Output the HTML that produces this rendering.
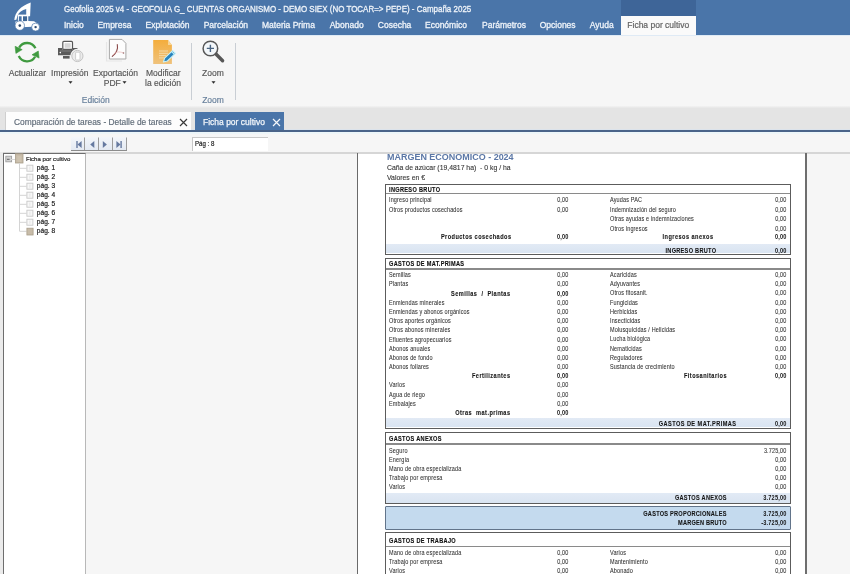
<!DOCTYPE html>
<html><head><meta charset="utf-8"><style>
html,body{margin:0;padding:0;width:850px;height:574px;overflow:hidden;background:#f5f5f5}
body{position:relative;font-family:"Liberation Sans",sans-serif;will-change:transform}
.t{position:absolute;white-space:nowrap;line-height:20px}
</style></head><body>
<div style="position:absolute;left:0px;top:0px;width:850px;height:35px;background:#4a75a9"></div>
<div style="position:absolute;left:621px;top:0px;width:75px;height:16px;background:#3e6598"></div>
<div style="position:absolute;left:621px;top:16px;width:75px;height:20px;background:#fafafa"></div>
<svg style="position:absolute;left:0;top:0" width="60" height="36" viewBox="0 0 60 36">
<path d="M14.3 20.1 C15 12 20.5 6 30.7 2.4 L30.1 16.2 L26.2 16.2 L26.2 9.1 C22 10 18.8 12.5 17.6 15.5 L16.4 19.8 Z" fill="#fff"/>
<rect x="17.9" y="14.6" width="10.4" height="8" fill="#fff"/>
<rect x="18.9" y="16.3" width="2.7" height="5" fill="#4a75a9"/>
<rect x="23" y="16.3" width="4.1" height="5.6" fill="#3f6796"/>
<path d="M15.5 21.5 L28.3 21 L34 21.3 L37.6 23.5 L38 26.5 L15.5 27.5 Z" fill="#fff"/>
<circle cx="19.8" cy="25.6" r="4.7" fill="#fff" stroke="#4a75a9" stroke-width="0.7"/><circle cx="19.8" cy="25.6" r="1.3" fill="#2d4a70"/>
<circle cx="35.6" cy="27.1" r="4" fill="#fff" stroke="#4a75a9" stroke-width="0.7"/><circle cx="35.6" cy="27.1" r="1.2" fill="#2d4a70"/>
</svg>
<div class="t" style="left:64px;top:-1.50px;font-size:9px;color:#eef3f9;font-weight:400;-webkit-text-stroke:0.3px #eef3f9;transform:scale(0.886,1.07);transform-origin:0 50%;">Geofolia 2025 v4 - GEOFOLIA G_ CUENTAS ORGANISMO - DEMO SIEX (NO TOCAR=&gt; PEPE) - Campaña 2025</div>
<div class="t" style="left:64px;top:14.70px;font-size:8.5px;color:#eef3f9;font-weight:400;-webkit-text-stroke:0.3px #eef3f9;">Inicio</div>
<div class="t" style="left:97.4px;top:14.70px;font-size:8.5px;color:#eef3f9;font-weight:400;-webkit-text-stroke:0.3px #eef3f9;">Empresa</div>
<div class="t" style="left:145.6px;top:14.70px;font-size:8.5px;color:#eef3f9;font-weight:400;-webkit-text-stroke:0.3px #eef3f9;">Explotación</div>
<div class="t" style="left:203.7px;top:14.70px;font-size:8.5px;color:#eef3f9;font-weight:400;-webkit-text-stroke:0.3px #eef3f9;">Parcelación</div>
<div class="t" style="left:262px;top:14.70px;font-size:8.5px;color:#eef3f9;font-weight:400;-webkit-text-stroke:0.3px #eef3f9;">Materia Prima</div>
<div class="t" style="left:329.7px;top:14.70px;font-size:8.5px;color:#eef3f9;font-weight:400;-webkit-text-stroke:0.3px #eef3f9;">Abonado</div>
<div class="t" style="left:377.8px;top:14.70px;font-size:8.5px;color:#eef3f9;font-weight:400;-webkit-text-stroke:0.3px #eef3f9;">Cosecha</div>
<div class="t" style="left:425px;top:14.70px;font-size:8.5px;color:#eef3f9;font-weight:400;-webkit-text-stroke:0.3px #eef3f9;">Económico</div>
<div class="t" style="left:482px;top:14.70px;font-size:8.5px;color:#eef3f9;font-weight:400;-webkit-text-stroke:0.3px #eef3f9;">Parámetros</div>
<div class="t" style="left:539.7px;top:14.70px;font-size:8.5px;color:#eef3f9;font-weight:400;-webkit-text-stroke:0.3px #eef3f9;">Opciones</div>
<div class="t" style="left:589.7px;top:14.70px;font-size:8.5px;color:#eef3f9;font-weight:400;-webkit-text-stroke:0.3px #eef3f9;">Ayuda</div>
<div class="t" style="left:627.3px;top:14.70px;font-size:8.5px;color:#636363;font-weight:400;-webkit-text-stroke:0.2px #636363;">Ficha por cultivo</div>
<div style="position:absolute;left:0px;top:35px;width:850px;height:1px;background:#dfeaf5"></div>
<div style="position:absolute;left:0px;top:36px;width:850px;height:72px;background:#f6f6f6"></div>
<svg style="position:absolute;left:10px;top:38px" width="35" height="28" viewBox="10 38 35 28">
<path d="M35.44 48.31 A9.2 9.2 0 0 0 19.13 47.6" fill="none" stroke="#3f9a3f" stroke-width="2.3"/>
<path d="M18.76 56.09 A9.2 9.2 0 0 0 35.07 56.8" fill="none" stroke="#3f9a3f" stroke-width="2.3"/>
<path d="M15.1 46.3 L22.2 49.6 L15.9 53.4 Z" fill="#3f9a3f" stroke="#3f9a3f" stroke-width="0.6" stroke-linejoin="round"/>
<path d="M39.1 58.1 L32.0 54.8 L38.3 51.0 Z" fill="#3f9a3f" stroke="#3f9a3f" stroke-width="0.6" stroke-linejoin="round"/>
</svg>
<svg style="position:absolute;left:52px;top:38px" width="36" height="28" viewBox="52 38 36 28">
<rect x="62.8" y="41.4" width="9.7" height="8" rx="1" fill="#fff" stroke="#585858" stroke-width="1.2"/>
<rect x="64.6" y="43.2" width="6" height="4.6" fill="#d5d5d5"/>
<path d="M58 48 L62.2 48 L62.2 49.6 L73 49.6 L73 48 L77.5 48 L77.5 55.2 L58 55.2 Z" fill="#5a5a5a"/>
<path d="M60 51 H71" stroke="#8a8a8a" stroke-width="0.8"/>
<circle cx="60.3" cy="52.6" r="0.8" fill="#fff"/>
<rect x="63" y="56" width="6.6" height="2.6" fill="#5a5a5a"/>
<circle cx="77.4" cy="56" r="7.2" fill="#f6f6f6"/>
<circle cx="77.4" cy="56" r="5.6" fill="#ececec" stroke="#c4c4c4" stroke-width="1"/>
<rect x="75.6" y="52.2" width="4.4" height="7.8" rx="0.8" fill="#fff" stroke="#bdbdbd" stroke-width="0.7"/>
</svg>
<svg style="position:absolute;left:100px;top:36px" width="32" height="30" viewBox="100 36 32 30">
<path d="M106.5 42 V61 H122" fill="none" stroke="#e6e6e6" stroke-width="1.2"/>
<path d="M109.4 39.4 L122 39.4 L125.9 43.3 L125.9 59 L109.4 59 Z" fill="#fdfdfd" stroke="#a8a8a8" stroke-width="1"/>
<path d="M117.3 44.5 C118 48 116.5 53 112.3 56.4" fill="none" stroke="#8a4848" stroke-width="1.1" stroke-linecap="round"/>
<path d="M113 55 C115 52 119 51 123.5 53" fill="none" stroke="#e8b8b8" stroke-width="0.7"/>
<circle cx="123.5" cy="53" r="0.8" fill="#9a6a6a"/>
</svg>
<svg style="position:absolute;left:146px;top:36px" width="36" height="32" viewBox="146 36 36 32">
<defs><linearGradient id="og" x1="0" y1="0" x2="0" y2="1"><stop offset="0" stop-color="#f4ad3c"/><stop offset="1" stop-color="#efc27c"/></linearGradient></defs>
<path d="M153.2 39.9 L168 39.9 L171.9 44.9 L171.9 63.9 L153.2 63.9 Z" fill="url(#og)"/>
<path d="M168 39.9 L168 44.9 L171.9 44.9 Z" fill="#f7d598"/>
<path d="M159 51 H168 M159 53.3 H168 M159 55.6 H166 M159 57.9 H164" stroke="#f6dcae" stroke-width="0.9"/>
<path d="M163.4 62 L164.6 58.2 L172.6 50.6 L175.4 53.4 L167.4 61 Z" fill="#2a83bd" stroke="#c9f1f8" stroke-width="1.1" stroke-linejoin="round"/>
<path d="M171.6 51.6 L174.4 54.4" stroke="#bdeef6" stroke-width="1.2"/>
</svg>
<svg style="position:absolute;left:196px;top:36px" width="36" height="30" viewBox="196 36 36 30">
<circle cx="210.4" cy="48.5" r="7.3" fill="#f3f7fa" stroke="#575757" stroke-width="1.5"/>
<path d="M206.8 48.4 H214 M210.4 44.7 V52" stroke="#4a6482" stroke-width="1.4"/>
<path d="M216.2 54.2 L222.6 60.8" stroke="#575757" stroke-width="3.4" stroke-linecap="round"/>
</svg>
<div class="t" style="left:8.8px;top:63.10px;font-size:8.5px;color:#555;font-weight:400;-webkit-text-stroke:0.15px #555;">Actualizar</div>
<div class="t" style="left:51.1px;top:63.10px;font-size:8.5px;color:#555;font-weight:400;-webkit-text-stroke:0.15px #555;">Impresión</div>
<svg style="position:absolute;left:68px;top:81px" width="5" height="3"><path d="M0.5 0.3 H4.5 L2.5 2.8 Z" fill="#2a2a2a"/></svg>
<div class="t" style="left:93px;top:63.10px;font-size:8.5px;color:#555;font-weight:400;-webkit-text-stroke:0.15px #555;">Exportación</div>
<div class="t" style="left:103.8px;top:73.10px;font-size:8.5px;color:#555;font-weight:400;-webkit-text-stroke:0.15px #555;">PDF</div>
<svg style="position:absolute;left:121.5px;top:81px" width="5" height="3"><path d="M0.5 0.3 H4.5 L2.5 2.8 Z" fill="#2a2a2a"/></svg>
<div class="t" style="left:146px;top:63.10px;font-size:8.5px;color:#555;font-weight:400;-webkit-text-stroke:0.15px #555;">Modificar</div>
<div class="t" style="left:145px;top:73.10px;font-size:8.5px;color:#555;font-weight:400;-webkit-text-stroke:0.15px #555;">la edición</div>
<div class="t" style="left:202px;top:63.10px;font-size:8.5px;color:#555;font-weight:400;-webkit-text-stroke:0.15px #555;">Zoom</div>
<svg style="position:absolute;left:210.5px;top:81px" width="5" height="3"><path d="M0.5 0.3 H4.5 L2.5 2.8 Z" fill="#2a2a2a"/></svg>
<div class="t" style="left:-104.3px;width:400px;text-align:center;top:90.00px;font-size:8.5px;color:#647d99;font-weight:400;-webkit-text-stroke:0.15px #647d99;">Edición</div>
<div class="t" style="left:13px;width:400px;text-align:center;top:90.00px;font-size:8.5px;color:#647d99;font-weight:400;-webkit-text-stroke:0.15px #647d99;">Zoom</div>
<div style="position:absolute;left:191px;top:43px;width:1px;height:57px;background:#c9ced4"></div>
<div style="position:absolute;left:235px;top:43px;width:1px;height:57px;background:#c9ced4"></div>
<div style="position:absolute;left:0px;top:105.5px;width:850px;height:2.5px;background:linear-gradient(#f3f3f3,#e6e6e6)"></div>
<div style="position:absolute;left:0px;top:108px;width:850px;height:22px;background:#e4e4e4"></div>
<div style="position:absolute;left:0px;top:128.5px;width:850px;height:1.5px;background:#dce3eb"></div>
<div style="position:absolute;left:5px;top:112px;width:186px;height:18px;background:#fdfdfd;border-left:1px solid #cfcfcf;box-sizing:border-box"></div>
<div class="t" style="left:14px;top:111.50px;font-size:8.4px;color:#5f6b78;font-weight:400;-webkit-text-stroke:0.15px #5f6b78;">Comparación de tareas - Detalle de tareas</div>
<svg style="position:absolute;left:178.5px;top:117.5px" width="9" height="9" viewBox="0 0 9 9"><path d="M1 1 L8 8 M8 1 L1 8" stroke="#3a3a3a" stroke-width="1.2"/></svg>
<div style="position:absolute;left:195px;top:112px;width:89px;height:18px;background:#4a75a9"></div>
<div class="t" style="left:203px;top:111.50px;font-size:8.5px;color:#f2f6fa;font-weight:400;-webkit-text-stroke:0.25px #f2f6fa;">Ficha por cultivo</div>
<svg style="position:absolute;left:272px;top:117.5px" width="9" height="9" viewBox="0 0 9 9"><path d="M1 1 L8 8 M8 1 L1 8" stroke="#f5f8fb" stroke-width="1.2"/></svg>
<div style="position:absolute;left:0px;top:130px;width:850px;height:2px;background:#4a6489"></div>
<div style="position:absolute;left:0px;top:132px;width:850px;height:442px;background:#f6f6f6"></div>
<div style="position:absolute;left:0px;top:132px;width:850px;height:1.5px;background:#edf6f9"></div>
<svg style="position:absolute;left:70px;top:136px" width="58" height="16" viewBox="0 0 58 16">
<defs><linearGradient id="nb" x1="0" y1="0" x2="0" y2="1"><stop offset="0" stop-color="#f3f6fa"/><stop offset="1" stop-color="#e3e9f2"/></linearGradient></defs>
<rect x="1" y="1" width="56" height="13.5" fill="url(#nb)"/>
<path d="M1 14.5 H57" stroke="#8c8c8c" stroke-width="1"/>
<path d="M14.5 1.5 V14 M28.5 1.5 V14 M42.5 1.5 V14 M56.5 1.5 V14" stroke="#9c9c9c" stroke-width="1"/>
<rect x="6.3" y="5" width="1.4" height="7" fill="#6579a0"/><path d="M11.6 5 V12 L7.5 8.5 Z" fill="#6579a0"/>
<path d="M24.3 5 V12 L20.2 8.5 Z" fill="#6579a0"/>
<path d="M32.8 5 V12 L36.9 8.5 Z" fill="#6579a0"/>
<path d="M46.4 5 V12 L50.5 8.5 Z" fill="#6579a0"/><rect x="50.4" y="5" width="1.4" height="7" fill="#6579a0"/>
</svg>
<div style="position:absolute;left:192px;top:137px;width:76px;height:14px;background:#fff;border-top:1px solid #c8c8c8;border-left:1px solid #c8c8c8;box-sizing:border-box"></div>
<div class="t" style="left:194.7px;top:133.60px;font-size:6.6px;color:#222;font-weight:400;transform:scaleX(0.93);transform-origin:0 50%;-webkit-text-stroke:0.2px #222;">Pág : 8</div>
<div style="position:absolute;left:0px;top:152px;width:850px;height:2px;background:#d6d6d6"></div>
<div style="position:absolute;left:0px;top:152px;width:3px;height:422px;background:#ebebeb"></div>
<div style="position:absolute;left:3px;top:152.8px;width:83px;height:440px;background:#fff;border-top:1.5px solid #6e6e6e;border-left:1.1px solid #6e6e6e;border-right:1.5px solid #b8b8b8;box-sizing:border-box"></div>
<svg style="position:absolute;left:0;top:150px" width="80" height="90" viewBox="0 150 80 90">
<rect x="5.8" y="156.2" width="5.8" height="5.6" fill="#d2d2d2" stroke="#a0a0a0" stroke-width="0.9"/>
<path d="M7 159.3 H9.6" stroke="#555" stroke-width="0.9"/>
<rect x="11" y="159" width="4.5" height="1" fill="#d8d8d8"/>
<rect x="15.5" y="153.8" width="7.5" height="9.2" fill="#c8bca9" stroke="#a99d8a" stroke-width="0.8"/>
<path d="M17.3 157 H21.3 M17.3 159 H21.3 M17.3 161 H21.3" stroke="#ddd3c4" stroke-width="0.6"/>
<rect x="19" y="163" width="1" height="68.5" fill="#d4d4d4"/>
<rect x="20" y="167.8" width="6.5" height="1" fill="#d4d4d4"/><rect x="20" y="176.8" width="6.5" height="1" fill="#d4d4d4"/><rect x="20" y="185.8" width="6.5" height="1" fill="#d4d4d4"/><rect x="20" y="194.8" width="6.5" height="1" fill="#d4d4d4"/><rect x="20" y="203.8" width="6.5" height="1" fill="#d4d4d4"/><rect x="20" y="212.8" width="6.5" height="1" fill="#d4d4d4"/><rect x="20" y="221.8" width="6.5" height="1" fill="#d4d4d4"/><rect x="20" y="230.8" width="6.5" height="1" fill="#d4d4d4"/><rect x="26.9" y="165.2" width="6" height="6" fill="#f8f8f8" stroke="#c8c8c8" stroke-width="0.9"/><path d="M29.9 166.6 V169.8" stroke="#dcdcdc" stroke-width="0.7"/><rect x="26.9" y="174.2" width="6" height="6" fill="#f8f8f8" stroke="#c8c8c8" stroke-width="0.9"/><path d="M29.9 175.6 V178.8" stroke="#dcdcdc" stroke-width="0.7"/><rect x="26.9" y="183.2" width="6" height="6" fill="#f8f8f8" stroke="#c8c8c8" stroke-width="0.9"/><path d="M29.9 184.6 V187.8" stroke="#dcdcdc" stroke-width="0.7"/><rect x="26.9" y="192.2" width="6" height="6" fill="#f8f8f8" stroke="#c8c8c8" stroke-width="0.9"/><path d="M29.9 193.6 V196.8" stroke="#dcdcdc" stroke-width="0.7"/><rect x="26.9" y="201.2" width="6" height="6" fill="#f8f8f8" stroke="#c8c8c8" stroke-width="0.9"/><path d="M29.9 202.6 V205.8" stroke="#dcdcdc" stroke-width="0.7"/><rect x="26.9" y="210.2" width="6" height="6" fill="#f8f8f8" stroke="#c8c8c8" stroke-width="0.9"/><path d="M29.9 211.6 V214.8" stroke="#dcdcdc" stroke-width="0.7"/><rect x="26.9" y="219.2" width="6" height="6" fill="#f8f8f8" stroke="#c8c8c8" stroke-width="0.9"/><path d="M29.9 220.6 V223.8" stroke="#dcdcdc" stroke-width="0.7"/>
<rect x="26.9" y="228.2" width="6.2" height="6.8" fill="#c8bca9" stroke="#a99d8a" stroke-width="0.8"/>
</svg>
<div class="t" style="left:26px;top:149.30px;font-size:6.1px;color:#2a2a2a;font-weight:400;-webkit-text-stroke:0.2px #2a2a2a;">Ficha por cultivo</div>
<div class="t" style="left:36.8px;top:158.30px;font-size:6.6px;color:#222;font-weight:400;-webkit-text-stroke:0.2px #222;">pág. 1</div>
<div class="t" style="left:36.8px;top:167.30px;font-size:6.6px;color:#222;font-weight:400;-webkit-text-stroke:0.2px #222;">pág. 2</div>
<div class="t" style="left:36.8px;top:176.30px;font-size:6.6px;color:#222;font-weight:400;-webkit-text-stroke:0.2px #222;">pág. 3</div>
<div class="t" style="left:36.8px;top:185.30px;font-size:6.6px;color:#222;font-weight:400;-webkit-text-stroke:0.2px #222;">pág. 4</div>
<div class="t" style="left:36.8px;top:194.30px;font-size:6.6px;color:#222;font-weight:400;-webkit-text-stroke:0.2px #222;">pág. 5</div>
<div class="t" style="left:36.8px;top:203.30px;font-size:6.6px;color:#222;font-weight:400;-webkit-text-stroke:0.2px #222;">pág. 6</div>
<div class="t" style="left:36.8px;top:212.30px;font-size:6.6px;color:#222;font-weight:400;-webkit-text-stroke:0.2px #222;">pág. 7</div>
<div class="t" style="left:36.8px;top:221.30px;font-size:6.6px;color:#222;font-weight:400;-webkit-text-stroke:0.2px #222;">pág. 8</div>
<div style="position:absolute;left:357px;top:153px;width:1px;height:421px;background:#6a6a6a"></div>
<div style="position:absolute;left:358px;top:154px;width:447px;height:420px;background:#fff"></div>
<div style="position:absolute;left:805px;top:153px;width:2px;height:421px;background:#6e6e6e"></div>
<div class="t" style="left:387px;top:146.60px;font-size:9.6px;color:#5b77a6;font-weight:700;transform:scaleX(0.935);transform-origin:0 50%;">MARGEN ECONOMICO - 2024</div>
<div class="t" style="left:387px;top:158.30px;font-size:7.2px;color:#333;font-weight:400;transform:scaleX(0.955);transform-origin:0 50%;-webkit-text-stroke:0.1px #333;">Caña de azúcar (19,4817 ha) &nbsp;- 0 kg / ha</div>
<div class="t" style="left:387px;top:167.50px;font-size:7.2px;color:#333;font-weight:400;transform:scaleX(0.955);transform-origin:0 50%;-webkit-text-stroke:0.1px #333;">Valores en €</div>
<div style="position:absolute;left:385px;top:183.9px;width:406px;height:70.9px;border:1.3px solid #5c5c5c;border-bottom-width:1.6px;box-sizing:border-box;background:#fff"></div>
<div style="position:absolute;left:386.3px;top:243.8px;width:403.4px;height:9.599999999999994px;background:linear-gradient(#e2eaf5,#d9e4f1)"></div>
<div style="position:absolute;left:386.3px;top:192.9px;width:403.4px;height:1.4px;background:#8a8a8a"></div>
<div class="t" style="left:389px;top:179.60px;font-size:5.6px;color:#111;font-weight:700;letter-spacing:0.33px;transform:scale(1,1.15);transform-origin:0 50%;-webkit-text-stroke:0.12px #111;">INGRESO BRUTO</div>
<div class="t" style="left:389px;top:190.10px;font-size:5.5px;color:#2e2e2e;font-weight:400;letter-spacing:0.14px;transform:scale(1,1.15);transform-origin:0 50%;-webkit-text-stroke:0.05px #2e2e2e;">Ingreso principal</div>
<div class="t" style="right:281.6px;top:190.10px;font-size:5.5px;color:#2e2e2e;font-weight:400;letter-spacing:0.14px;transform:scale(1,1.15);transform-origin:100% 50%;-webkit-text-stroke:0.05px #2e2e2e;">0,00</div>
<div class="t" style="left:389px;top:199.70px;font-size:5.5px;color:#2e2e2e;font-weight:400;letter-spacing:0.14px;transform:scale(1,1.15);transform-origin:0 50%;-webkit-text-stroke:0.05px #2e2e2e;">Otros productos cosechados</div>
<div class="t" style="right:281.6px;top:199.70px;font-size:5.5px;color:#2e2e2e;font-weight:400;letter-spacing:0.14px;transform:scale(1,1.15);transform-origin:100% 50%;-webkit-text-stroke:0.05px #2e2e2e;">0,00</div>
<div class="t" style="left:610px;top:190.10px;font-size:5.5px;color:#2e2e2e;font-weight:400;letter-spacing:0.14px;transform:scale(1,1.15);transform-origin:0 50%;-webkit-text-stroke:0.05px #2e2e2e;">Ayudas PAC</div>
<div class="t" style="right:63.60000000000002px;top:190.10px;font-size:5.5px;color:#2e2e2e;font-weight:400;letter-spacing:0.14px;transform:scale(1,1.15);transform-origin:100% 50%;-webkit-text-stroke:0.05px #2e2e2e;">0,00</div>
<div class="t" style="left:610px;top:199.70px;font-size:5.5px;color:#2e2e2e;font-weight:400;letter-spacing:0.14px;transform:scale(1,1.15);transform-origin:0 50%;-webkit-text-stroke:0.05px #2e2e2e;">Indemnización del seguro</div>
<div class="t" style="right:63.60000000000002px;top:199.70px;font-size:5.5px;color:#2e2e2e;font-weight:400;letter-spacing:0.14px;transform:scale(1,1.15);transform-origin:100% 50%;-webkit-text-stroke:0.05px #2e2e2e;">0,00</div>
<div class="t" style="left:610px;top:209.30px;font-size:5.5px;color:#2e2e2e;font-weight:400;letter-spacing:0.14px;transform:scale(1,1.15);transform-origin:0 50%;-webkit-text-stroke:0.05px #2e2e2e;">Otras ayudas e indemnizaciones</div>
<div class="t" style="right:63.60000000000002px;top:209.30px;font-size:5.5px;color:#2e2e2e;font-weight:400;letter-spacing:0.14px;transform:scale(1,1.15);transform-origin:100% 50%;-webkit-text-stroke:0.05px #2e2e2e;">0,00</div>
<div class="t" style="left:610px;top:218.90px;font-size:5.5px;color:#2e2e2e;font-weight:400;letter-spacing:0.14px;transform:scale(1,1.15);transform-origin:0 50%;-webkit-text-stroke:0.05px #2e2e2e;">Otros ingresos</div>
<div class="t" style="right:63.60000000000002px;top:218.90px;font-size:5.5px;color:#2e2e2e;font-weight:400;letter-spacing:0.14px;transform:scale(1,1.15);transform-origin:100% 50%;-webkit-text-stroke:0.05px #2e2e2e;">0,00</div>
<div class="t" style="right:338.55px;top:227.20px;font-size:5.6px;color:#141414;font-weight:700;letter-spacing:0.45px;transform:scale(1,1.15);transform-origin:100% 50%;-webkit-text-stroke:0.08px #141414;">Productos cosechados</div>
<div class="t" style="right:281.4px;top:227.20px;font-size:5.6px;color:#141414;font-weight:700;letter-spacing:0.2px;transform:scale(1,1.15);transform-origin:100% 50%;">0,00</div>
<div class="t" style="right:136.54999999999995px;top:227.20px;font-size:5.6px;color:#141414;font-weight:700;letter-spacing:0.45px;transform:scale(1,1.15);transform-origin:100% 50%;-webkit-text-stroke:0.08px #141414;">Ingresos anexos</div>
<div class="t" style="right:63.39999999999998px;top:227.20px;font-size:5.6px;color:#141414;font-weight:700;letter-spacing:0.2px;transform:scale(1,1.15);transform-origin:100% 50%;">0,00</div>
<div class="t" style="right:133.72000000000003px;top:240.50px;font-size:5.6px;color:#141414;font-weight:700;letter-spacing:0.28px;transform:scale(1,1.15);transform-origin:100% 50%;-webkit-text-stroke:0.08px #141414;">INGRESO BRUTO</div>
<div class="t" style="right:63.39999999999998px;top:240.50px;font-size:5.6px;color:#141414;font-weight:700;letter-spacing:0.2px;transform:scale(1,1.15);transform-origin:100% 50%;">0,00</div>
<div style="position:absolute;left:385px;top:258px;width:406px;height:170.8px;border:1.3px solid #5c5c5c;border-bottom-width:1.6px;box-sizing:border-box;background:#fff"></div>
<div style="position:absolute;left:386.3px;top:417.6px;width:403.4px;height:9.599999999999966px;background:linear-gradient(#e2eaf5,#d9e4f1)"></div>
<div style="position:absolute;left:386.3px;top:268.29999999999995px;width:403.4px;height:1.4px;background:#8a8a8a"></div>
<div class="t" style="left:389px;top:254.30px;font-size:5.6px;color:#111;font-weight:700;letter-spacing:0.33px;transform:scale(1,1.15);transform-origin:0 50%;-webkit-text-stroke:0.12px #111;">GASTOS DE MAT.PRIMAS</div>
<div class="t" style="left:389px;top:265.10px;font-size:5.5px;color:#2e2e2e;font-weight:400;letter-spacing:0.14px;transform:scale(1,1.15);transform-origin:0 50%;-webkit-text-stroke:0.05px #2e2e2e;">Semillas</div>
<div class="t" style="right:281.6px;top:265.10px;font-size:5.5px;color:#2e2e2e;font-weight:400;letter-spacing:0.14px;transform:scale(1,1.15);transform-origin:100% 50%;-webkit-text-stroke:0.05px #2e2e2e;">0,00</div>
<div class="t" style="left:389px;top:274.30px;font-size:5.5px;color:#2e2e2e;font-weight:400;letter-spacing:0.14px;transform:scale(1,1.15);transform-origin:0 50%;-webkit-text-stroke:0.05px #2e2e2e;">Plantas</div>
<div class="t" style="right:281.6px;top:274.30px;font-size:5.5px;color:#2e2e2e;font-weight:400;letter-spacing:0.14px;transform:scale(1,1.15);transform-origin:100% 50%;-webkit-text-stroke:0.05px #2e2e2e;">0,00</div>
<div class="t" style="left:389px;top:292.70px;font-size:5.5px;color:#2e2e2e;font-weight:400;letter-spacing:0.14px;transform:scale(1,1.15);transform-origin:0 50%;-webkit-text-stroke:0.05px #2e2e2e;">Enmiendas minerales</div>
<div class="t" style="right:281.6px;top:292.70px;font-size:5.5px;color:#2e2e2e;font-weight:400;letter-spacing:0.14px;transform:scale(1,1.15);transform-origin:100% 50%;-webkit-text-stroke:0.05px #2e2e2e;">0,00</div>
<div class="t" style="left:389px;top:301.80px;font-size:5.5px;color:#2e2e2e;font-weight:400;letter-spacing:0.14px;transform:scale(1,1.15);transform-origin:0 50%;-webkit-text-stroke:0.05px #2e2e2e;">Enmiendas y abonos orgánicos</div>
<div class="t" style="right:281.6px;top:301.80px;font-size:5.5px;color:#2e2e2e;font-weight:400;letter-spacing:0.14px;transform:scale(1,1.15);transform-origin:100% 50%;-webkit-text-stroke:0.05px #2e2e2e;">0,00</div>
<div class="t" style="left:389px;top:311.00px;font-size:5.5px;color:#2e2e2e;font-weight:400;letter-spacing:0.14px;transform:scale(1,1.15);transform-origin:0 50%;-webkit-text-stroke:0.05px #2e2e2e;">Otros aportes orgánicos</div>
<div class="t" style="right:281.6px;top:311.00px;font-size:5.5px;color:#2e2e2e;font-weight:400;letter-spacing:0.14px;transform:scale(1,1.15);transform-origin:100% 50%;-webkit-text-stroke:0.05px #2e2e2e;">0,00</div>
<div class="t" style="left:389px;top:320.30px;font-size:5.5px;color:#2e2e2e;font-weight:400;letter-spacing:0.14px;transform:scale(1,1.15);transform-origin:0 50%;-webkit-text-stroke:0.05px #2e2e2e;">Otros abonos minerales</div>
<div class="t" style="right:281.6px;top:320.30px;font-size:5.5px;color:#2e2e2e;font-weight:400;letter-spacing:0.14px;transform:scale(1,1.15);transform-origin:100% 50%;-webkit-text-stroke:0.05px #2e2e2e;">0,00</div>
<div class="t" style="left:389px;top:329.50px;font-size:5.5px;color:#2e2e2e;font-weight:400;letter-spacing:0.14px;transform:scale(1,1.15);transform-origin:0 50%;-webkit-text-stroke:0.05px #2e2e2e;">Efluentes agropecuarios</div>
<div class="t" style="right:281.6px;top:329.50px;font-size:5.5px;color:#2e2e2e;font-weight:400;letter-spacing:0.14px;transform:scale(1,1.15);transform-origin:100% 50%;-webkit-text-stroke:0.05px #2e2e2e;">0,00</div>
<div class="t" style="left:389px;top:338.70px;font-size:5.5px;color:#2e2e2e;font-weight:400;letter-spacing:0.14px;transform:scale(1,1.15);transform-origin:0 50%;-webkit-text-stroke:0.05px #2e2e2e;">Abonos anuales</div>
<div class="t" style="right:281.6px;top:338.70px;font-size:5.5px;color:#2e2e2e;font-weight:400;letter-spacing:0.14px;transform:scale(1,1.15);transform-origin:100% 50%;-webkit-text-stroke:0.05px #2e2e2e;">0,00</div>
<div class="t" style="left:389px;top:347.90px;font-size:5.5px;color:#2e2e2e;font-weight:400;letter-spacing:0.14px;transform:scale(1,1.15);transform-origin:0 50%;-webkit-text-stroke:0.05px #2e2e2e;">Abonos de fondo</div>
<div class="t" style="right:281.6px;top:347.90px;font-size:5.5px;color:#2e2e2e;font-weight:400;letter-spacing:0.14px;transform:scale(1,1.15);transform-origin:100% 50%;-webkit-text-stroke:0.05px #2e2e2e;">0,00</div>
<div class="t" style="left:389px;top:357.10px;font-size:5.5px;color:#2e2e2e;font-weight:400;letter-spacing:0.14px;transform:scale(1,1.15);transform-origin:0 50%;-webkit-text-stroke:0.05px #2e2e2e;">Abonos foliares</div>
<div class="t" style="right:281.6px;top:357.10px;font-size:5.5px;color:#2e2e2e;font-weight:400;letter-spacing:0.14px;transform:scale(1,1.15);transform-origin:100% 50%;-webkit-text-stroke:0.05px #2e2e2e;">0,00</div>
<div class="t" style="left:389px;top:375.30px;font-size:5.5px;color:#2e2e2e;font-weight:400;letter-spacing:0.14px;transform:scale(1,1.15);transform-origin:0 50%;-webkit-text-stroke:0.05px #2e2e2e;">Varios</div>
<div class="t" style="right:281.6px;top:375.30px;font-size:5.5px;color:#2e2e2e;font-weight:400;letter-spacing:0.14px;transform:scale(1,1.15);transform-origin:100% 50%;-webkit-text-stroke:0.05px #2e2e2e;">0,00</div>
<div class="t" style="left:389px;top:384.50px;font-size:5.5px;color:#2e2e2e;font-weight:400;letter-spacing:0.14px;transform:scale(1,1.15);transform-origin:0 50%;-webkit-text-stroke:0.05px #2e2e2e;">Agua de riego</div>
<div class="t" style="right:281.6px;top:384.50px;font-size:5.5px;color:#2e2e2e;font-weight:400;letter-spacing:0.14px;transform:scale(1,1.15);transform-origin:100% 50%;-webkit-text-stroke:0.05px #2e2e2e;">0,00</div>
<div class="t" style="left:389px;top:393.70px;font-size:5.5px;color:#2e2e2e;font-weight:400;letter-spacing:0.14px;transform:scale(1,1.15);transform-origin:0 50%;-webkit-text-stroke:0.05px #2e2e2e;">Embalajes</div>
<div class="t" style="right:281.6px;top:393.70px;font-size:5.5px;color:#2e2e2e;font-weight:400;letter-spacing:0.14px;transform:scale(1,1.15);transform-origin:100% 50%;-webkit-text-stroke:0.05px #2e2e2e;">0,00</div>
<div class="t" style="right:339.55px;top:283.50px;font-size:5.6px;color:#141414;font-weight:700;letter-spacing:0.45px;transform:scale(1,1.15);transform-origin:100% 50%;-webkit-text-stroke:0.08px #141414;">Semillas &nbsp;/ &nbsp;Plantas</div>
<div class="t" style="right:281.4px;top:283.50px;font-size:5.6px;color:#141414;font-weight:700;letter-spacing:0.2px;transform:scale(1,1.15);transform-origin:100% 50%;">0,00</div>
<div class="t" style="right:339.55px;top:366.20px;font-size:5.6px;color:#141414;font-weight:700;letter-spacing:0.45px;transform:scale(1,1.15);transform-origin:100% 50%;-webkit-text-stroke:0.08px #141414;">Fertilizantes</div>
<div class="t" style="right:281.4px;top:366.20px;font-size:5.6px;color:#141414;font-weight:700;letter-spacing:0.2px;transform:scale(1,1.15);transform-origin:100% 50%;">0,00</div>
<div class="t" style="right:339.55px;top:402.50px;font-size:5.6px;color:#141414;font-weight:700;letter-spacing:0.45px;transform:scale(1,1.15);transform-origin:100% 50%;-webkit-text-stroke:0.08px #141414;">Otras &nbsp;mat.primas</div>
<div class="t" style="right:281.4px;top:402.50px;font-size:5.6px;color:#141414;font-weight:700;letter-spacing:0.2px;transform:scale(1,1.15);transform-origin:100% 50%;">0,00</div>
<div class="t" style="left:610px;top:265.10px;font-size:5.5px;color:#2e2e2e;font-weight:400;letter-spacing:0.14px;transform:scale(1,1.15);transform-origin:0 50%;-webkit-text-stroke:0.05px #2e2e2e;">Acaricidas</div>
<div class="t" style="right:63.60000000000002px;top:265.10px;font-size:5.5px;color:#2e2e2e;font-weight:400;letter-spacing:0.14px;transform:scale(1,1.15);transform-origin:100% 50%;-webkit-text-stroke:0.05px #2e2e2e;">0,00</div>
<div class="t" style="left:610px;top:274.28px;font-size:5.5px;color:#2e2e2e;font-weight:400;letter-spacing:0.14px;transform:scale(1,1.15);transform-origin:0 50%;-webkit-text-stroke:0.05px #2e2e2e;">Adyuvantes</div>
<div class="t" style="right:63.60000000000002px;top:274.28px;font-size:5.5px;color:#2e2e2e;font-weight:400;letter-spacing:0.14px;transform:scale(1,1.15);transform-origin:100% 50%;-webkit-text-stroke:0.05px #2e2e2e;">0,00</div>
<div class="t" style="left:610px;top:283.46px;font-size:5.5px;color:#2e2e2e;font-weight:400;letter-spacing:0.14px;transform:scale(1,1.15);transform-origin:0 50%;-webkit-text-stroke:0.05px #2e2e2e;">Otros fitosanit.</div>
<div class="t" style="right:63.60000000000002px;top:283.46px;font-size:5.5px;color:#2e2e2e;font-weight:400;letter-spacing:0.14px;transform:scale(1,1.15);transform-origin:100% 50%;-webkit-text-stroke:0.05px #2e2e2e;">0,00</div>
<div class="t" style="left:610px;top:292.64px;font-size:5.5px;color:#2e2e2e;font-weight:400;letter-spacing:0.14px;transform:scale(1,1.15);transform-origin:0 50%;-webkit-text-stroke:0.05px #2e2e2e;">Fungicidas</div>
<div class="t" style="right:63.60000000000002px;top:292.64px;font-size:5.5px;color:#2e2e2e;font-weight:400;letter-spacing:0.14px;transform:scale(1,1.15);transform-origin:100% 50%;-webkit-text-stroke:0.05px #2e2e2e;">0,00</div>
<div class="t" style="left:610px;top:301.82px;font-size:5.5px;color:#2e2e2e;font-weight:400;letter-spacing:0.14px;transform:scale(1,1.15);transform-origin:0 50%;-webkit-text-stroke:0.05px #2e2e2e;">Herbicidas</div>
<div class="t" style="right:63.60000000000002px;top:301.82px;font-size:5.5px;color:#2e2e2e;font-weight:400;letter-spacing:0.14px;transform:scale(1,1.15);transform-origin:100% 50%;-webkit-text-stroke:0.05px #2e2e2e;">0,00</div>
<div class="t" style="left:610px;top:311.00px;font-size:5.5px;color:#2e2e2e;font-weight:400;letter-spacing:0.14px;transform:scale(1,1.15);transform-origin:0 50%;-webkit-text-stroke:0.05px #2e2e2e;">Insecticidas</div>
<div class="t" style="right:63.60000000000002px;top:311.00px;font-size:5.5px;color:#2e2e2e;font-weight:400;letter-spacing:0.14px;transform:scale(1,1.15);transform-origin:100% 50%;-webkit-text-stroke:0.05px #2e2e2e;">0,00</div>
<div class="t" style="left:610px;top:320.18px;font-size:5.5px;color:#2e2e2e;font-weight:400;letter-spacing:0.14px;transform:scale(1,1.15);transform-origin:0 50%;-webkit-text-stroke:0.05px #2e2e2e;">Molusquicidas / Helicidas</div>
<div class="t" style="right:63.60000000000002px;top:320.18px;font-size:5.5px;color:#2e2e2e;font-weight:400;letter-spacing:0.14px;transform:scale(1,1.15);transform-origin:100% 50%;-webkit-text-stroke:0.05px #2e2e2e;">0,00</div>
<div class="t" style="left:610px;top:329.36px;font-size:5.5px;color:#2e2e2e;font-weight:400;letter-spacing:0.14px;transform:scale(1,1.15);transform-origin:0 50%;-webkit-text-stroke:0.05px #2e2e2e;">Lucha biológica</div>
<div class="t" style="right:63.60000000000002px;top:329.36px;font-size:5.5px;color:#2e2e2e;font-weight:400;letter-spacing:0.14px;transform:scale(1,1.15);transform-origin:100% 50%;-webkit-text-stroke:0.05px #2e2e2e;">0,00</div>
<div class="t" style="left:610px;top:338.54px;font-size:5.5px;color:#2e2e2e;font-weight:400;letter-spacing:0.14px;transform:scale(1,1.15);transform-origin:0 50%;-webkit-text-stroke:0.05px #2e2e2e;">Nematicidas</div>
<div class="t" style="right:63.60000000000002px;top:338.54px;font-size:5.5px;color:#2e2e2e;font-weight:400;letter-spacing:0.14px;transform:scale(1,1.15);transform-origin:100% 50%;-webkit-text-stroke:0.05px #2e2e2e;">0,00</div>
<div class="t" style="left:610px;top:347.72px;font-size:5.5px;color:#2e2e2e;font-weight:400;letter-spacing:0.14px;transform:scale(1,1.15);transform-origin:0 50%;-webkit-text-stroke:0.05px #2e2e2e;">Reguladores</div>
<div class="t" style="right:63.60000000000002px;top:347.72px;font-size:5.5px;color:#2e2e2e;font-weight:400;letter-spacing:0.14px;transform:scale(1,1.15);transform-origin:100% 50%;-webkit-text-stroke:0.05px #2e2e2e;">0,00</div>
<div class="t" style="left:610px;top:356.90px;font-size:5.5px;color:#2e2e2e;font-weight:400;letter-spacing:0.14px;transform:scale(1,1.15);transform-origin:0 50%;-webkit-text-stroke:0.05px #2e2e2e;">Sustancia de crecimiento</div>
<div class="t" style="right:63.60000000000002px;top:356.90px;font-size:5.5px;color:#2e2e2e;font-weight:400;letter-spacing:0.14px;transform:scale(1,1.15);transform-origin:100% 50%;-webkit-text-stroke:0.05px #2e2e2e;">0,00</div>
<div class="t" style="right:123.04999999999995px;top:366.20px;font-size:5.6px;color:#141414;font-weight:700;letter-spacing:0.45px;transform:scale(1,1.15);transform-origin:100% 50%;-webkit-text-stroke:0.08px #141414;">Fitosanitarios</div>
<div class="t" style="right:63.39999999999998px;top:366.20px;font-size:5.6px;color:#141414;font-weight:700;letter-spacing:0.2px;transform:scale(1,1.15);transform-origin:100% 50%;">0,00</div>
<div class="t" style="right:113.54999999999995px;top:413.70px;font-size:5.6px;color:#141414;font-weight:700;letter-spacing:0.45px;transform:scale(1,1.15);transform-origin:100% 50%;-webkit-text-stroke:0.08px #141414;">GASTOS DE MAT.PRIMAS</div>
<div class="t" style="right:63.39999999999998px;top:413.70px;font-size:5.6px;color:#141414;font-weight:700;letter-spacing:0.2px;transform:scale(1,1.15);transform-origin:100% 50%;">0,00</div>
<div style="position:absolute;left:385px;top:432.3px;width:406px;height:71.80000000000001px;border:1.3px solid #5c5c5c;border-bottom-width:1.6px;box-sizing:border-box;background:#fff"></div>
<div style="position:absolute;left:386.3px;top:493px;width:403.4px;height:9.600000000000023px;background:linear-gradient(#e2eaf5,#d9e4f1)"></div>
<div style="position:absolute;left:386.3px;top:443.29999999999995px;width:403.4px;height:1.4px;background:#8a8a8a"></div>
<div class="t" style="left:389px;top:429.30px;font-size:5.6px;color:#111;font-weight:700;letter-spacing:0.33px;transform:scale(1,1.15);transform-origin:0 50%;-webkit-text-stroke:0.12px #111;">GASTOS ANEXOS</div>
<div class="t" style="left:389px;top:440.90px;font-size:5.5px;color:#2e2e2e;font-weight:400;letter-spacing:0.14px;transform:scale(1,1.15);transform-origin:0 50%;-webkit-text-stroke:0.05px #2e2e2e;">Seguro</div>
<div class="t" style="right:63.60000000000002px;top:440.90px;font-size:5.5px;color:#2e2e2e;font-weight:400;letter-spacing:0.14px;transform:scale(1,1.15);transform-origin:100% 50%;-webkit-text-stroke:0.05px #2e2e2e;">3.725,00</div>
<div class="t" style="left:389px;top:450.00px;font-size:5.5px;color:#2e2e2e;font-weight:400;letter-spacing:0.14px;transform:scale(1,1.15);transform-origin:0 50%;-webkit-text-stroke:0.05px #2e2e2e;">Energía</div>
<div class="t" style="right:63.60000000000002px;top:450.00px;font-size:5.5px;color:#2e2e2e;font-weight:400;letter-spacing:0.14px;transform:scale(1,1.15);transform-origin:100% 50%;-webkit-text-stroke:0.05px #2e2e2e;">0,00</div>
<div class="t" style="left:389px;top:459.10px;font-size:5.5px;color:#2e2e2e;font-weight:400;letter-spacing:0.14px;transform:scale(1,1.15);transform-origin:0 50%;-webkit-text-stroke:0.05px #2e2e2e;">Mano de obra especializada</div>
<div class="t" style="right:63.60000000000002px;top:459.10px;font-size:5.5px;color:#2e2e2e;font-weight:400;letter-spacing:0.14px;transform:scale(1,1.15);transform-origin:100% 50%;-webkit-text-stroke:0.05px #2e2e2e;">0,00</div>
<div class="t" style="left:389px;top:468.20px;font-size:5.5px;color:#2e2e2e;font-weight:400;letter-spacing:0.14px;transform:scale(1,1.15);transform-origin:0 50%;-webkit-text-stroke:0.05px #2e2e2e;">Trabajo por empresa</div>
<div class="t" style="right:63.60000000000002px;top:468.20px;font-size:5.5px;color:#2e2e2e;font-weight:400;letter-spacing:0.14px;transform:scale(1,1.15);transform-origin:100% 50%;-webkit-text-stroke:0.05px #2e2e2e;">0,00</div>
<div class="t" style="left:389px;top:477.30px;font-size:5.5px;color:#2e2e2e;font-weight:400;letter-spacing:0.14px;transform:scale(1,1.15);transform-origin:0 50%;-webkit-text-stroke:0.05px #2e2e2e;">Varios</div>
<div class="t" style="right:63.60000000000002px;top:477.30px;font-size:5.5px;color:#2e2e2e;font-weight:400;letter-spacing:0.14px;transform:scale(1,1.15);transform-origin:100% 50%;-webkit-text-stroke:0.05px #2e2e2e;">0,00</div>
<div class="t" style="right:123.24000000000001px;top:488.20px;font-size:5.6px;color:#141414;font-weight:700;letter-spacing:0.26px;transform:scale(1,1.15);transform-origin:100% 50%;-webkit-text-stroke:0.08px #141414;">GASTOS ANEXOS</div>
<div class="t" style="right:63.39999999999998px;top:488.20px;font-size:5.6px;color:#141414;font-weight:700;letter-spacing:0.2px;transform:scale(1,1.15);transform-origin:100% 50%;">3.725,00</div>
<div style="position:absolute;left:385px;top:505.8px;width:406px;height:24.3px;border:1.3px solid #62748a;border-bottom-width:1.6px;box-sizing:border-box;background:#c4daee;border-radius:1px"></div>
<div class="t" style="right:123.25px;top:503.50px;font-size:5.6px;color:#141414;font-weight:700;letter-spacing:0.25px;transform:scale(1,1.15);transform-origin:100% 50%;-webkit-text-stroke:0.08px #141414;">GASTOS PROPORCIONALES</div>
<div class="t" style="right:63.39999999999998px;top:503.50px;font-size:5.6px;color:#141414;font-weight:700;letter-spacing:0.2px;transform:scale(1,1.15);transform-origin:100% 50%;">3.725,00</div>
<div class="t" style="right:123.29999999999995px;top:512.90px;font-size:5.6px;color:#141414;font-weight:700;letter-spacing:0.2px;transform:scale(1,1.15);transform-origin:100% 50%;-webkit-text-stroke:0.08px #141414;">MARGEN BRUTO</div>
<div class="t" style="right:63.39999999999998px;top:512.90px;font-size:5.6px;color:#141414;font-weight:700;letter-spacing:0.2px;transform:scale(1,1.15);transform-origin:100% 50%;">-3.725,00</div>
<div style="position:absolute;left:385px;top:531.7px;width:406px;height:60px;border:1.3px solid #5c5c5c;box-sizing:border-box;background:#fff"></div>
<div style="position:absolute;left:386.3px;top:545.7px;width:403.4px;height:1.4px;background:#8a8a8a"></div>
<div class="t" style="left:389px;top:530.50px;font-size:5.6px;color:#111;font-weight:700;letter-spacing:0.33px;transform:scale(1,1.15);transform-origin:0 50%;-webkit-text-stroke:0.12px #111;">GASTOS DE TRABAJO</div>
<div class="t" style="left:389px;top:543.10px;font-size:5.5px;color:#2e2e2e;font-weight:400;letter-spacing:0.14px;transform:scale(1,1.15);transform-origin:0 50%;-webkit-text-stroke:0.05px #2e2e2e;">Mano de obra especializada</div>
<div class="t" style="right:281.6px;top:543.10px;font-size:5.5px;color:#2e2e2e;font-weight:400;letter-spacing:0.14px;transform:scale(1,1.15);transform-origin:100% 50%;-webkit-text-stroke:0.05px #2e2e2e;">0,00</div>
<div class="t" style="left:610px;top:543.10px;font-size:5.5px;color:#2e2e2e;font-weight:400;letter-spacing:0.14px;transform:scale(1,1.15);transform-origin:0 50%;-webkit-text-stroke:0.05px #2e2e2e;">Varios</div>
<div class="t" style="right:63.60000000000002px;top:543.10px;font-size:5.5px;color:#2e2e2e;font-weight:400;letter-spacing:0.14px;transform:scale(1,1.15);transform-origin:100% 50%;-webkit-text-stroke:0.05px #2e2e2e;">0,00</div>
<div class="t" style="left:389px;top:552.00px;font-size:5.5px;color:#2e2e2e;font-weight:400;letter-spacing:0.14px;transform:scale(1,1.15);transform-origin:0 50%;-webkit-text-stroke:0.05px #2e2e2e;">Trabajo por empresa</div>
<div class="t" style="right:281.6px;top:552.00px;font-size:5.5px;color:#2e2e2e;font-weight:400;letter-spacing:0.14px;transform:scale(1,1.15);transform-origin:100% 50%;-webkit-text-stroke:0.05px #2e2e2e;">0,00</div>
<div class="t" style="left:610px;top:552.00px;font-size:5.5px;color:#2e2e2e;font-weight:400;letter-spacing:0.14px;transform:scale(1,1.15);transform-origin:0 50%;-webkit-text-stroke:0.05px #2e2e2e;">Mantenimiento</div>
<div class="t" style="right:63.60000000000002px;top:552.00px;font-size:5.5px;color:#2e2e2e;font-weight:400;letter-spacing:0.14px;transform:scale(1,1.15);transform-origin:100% 50%;-webkit-text-stroke:0.05px #2e2e2e;">0,00</div>
<div class="t" style="left:389px;top:560.90px;font-size:5.5px;color:#2e2e2e;font-weight:400;letter-spacing:0.14px;transform:scale(1,1.15);transform-origin:0 50%;-webkit-text-stroke:0.05px #2e2e2e;">Varios</div>
<div class="t" style="right:281.6px;top:560.90px;font-size:5.5px;color:#2e2e2e;font-weight:400;letter-spacing:0.14px;transform:scale(1,1.15);transform-origin:100% 50%;-webkit-text-stroke:0.05px #2e2e2e;">0,00</div>
<div class="t" style="left:610px;top:560.90px;font-size:5.5px;color:#2e2e2e;font-weight:400;letter-spacing:0.14px;transform:scale(1,1.15);transform-origin:0 50%;-webkit-text-stroke:0.05px #2e2e2e;">Abonado</div>
<div class="t" style="right:63.60000000000002px;top:560.90px;font-size:5.5px;color:#2e2e2e;font-weight:400;letter-spacing:0.14px;transform:scale(1,1.15);transform-origin:100% 50%;-webkit-text-stroke:0.05px #2e2e2e;">0,00</div>
</body></html>
